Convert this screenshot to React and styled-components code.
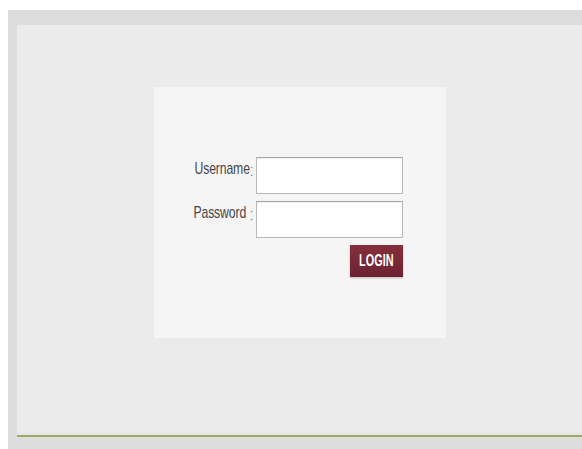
import React from 'react';
import styled, { createGlobalStyle } from 'styled-components';

const GlobalStyle = createGlobalStyle`
  html, body {
    margin: 0;
    padding: 0;
    background: #ffffff;
  }
  body {
    font-family: "Liberation Sans", Arial, sans-serif;
  }
`;

const Frame = styled.div`
  margin: 10px 0 0 8px;
  height: 439px;
  background: #dddddd;
  padding: 15px 0 0 9px;
  box-sizing: border-box;
`;

const Panel = styled.div`
  height: 412px;
  background: #ebebeb;
  border-bottom: 2px solid #9fae5c;
  box-shadow: inset 0 -3px 0 #e6e6ee;
  box-sizing: border-box;
  display: flex;
  justify-content: center;
  align-items: flex-start;
  padding-top: 62px;
`;

const Card = styled.div`
  width: 292px;
  height: 251px;
  background: #f5f5f5;
  box-sizing: border-box;
  padding: 70px 43px 0 0;
  display: flex;
  flex-direction: column;
  align-items: flex-end;
  gap: 7px;
`;

const Row = styled.div`
  display: flex;
  align-items: flex-start;
`;

const Label = styled.label`
  display: flex;
  align-items: flex-start;
  justify-content: flex-end;
  width: 100px;
  margin-right: 2px;
  color: #474747;
  font-size: 17px;
  line-height: 20px;
  padding-top: 2px;
`;

const LabelText = styled.span`
  display: inline-block;
  transform: scaleX(0.72);
  transform-origin: right center;
  letter-spacing: -0.2px;
`;

const Colon = styled.span`
  display: inline-block;
  width: 4px;
  margin-left: ${p => p.$gap}px;
  padding-top: ${p => p.$top}px;
  font-size: 11px;
  line-height: 4px;
  text-align: center;
  color: #6a6a6a;
  white-space: pre;
`;

const Field = styled.input`
  width: 147px;
  height: 37px;
  box-sizing: border-box;
  margin: 0;
  border: 1px solid #b8b8b8;
  border-top-color: #a4a4a4;
  background: #ffffff;
  box-shadow: inset 0 1px 1px rgba(0, 0, 0, 0.06);
  font-family: "Liberation Sans", Arial, sans-serif;
  font-size: 14px;
  padding: 0 6px;
  outline: none;
`;

const LoginButton = styled.button`
  width: 53px;
  height: 32px;
  border: none;
  background: linear-gradient(#84303d, #6c2230);
  box-shadow: 0 1px 2px rgba(0, 0, 0, 0.25);
  color: #ffffff;
  font-family: "Liberation Sans", Arial, sans-serif;
  font-weight: bold;
  font-size: 16px;
  padding: 0;
  cursor: pointer;
`;

const ButtonText = styled.span`
  display: inline-block;
  transform: scaleX(0.68);
`;

const App = () => {
  return (
    <>
      <GlobalStyle />
      <Frame>
        <Panel>
          <Card>
            <Row>
              <Label htmlFor="username">
                <LabelText>Username</LabelText>
                <Colon $gap={0} $top={6}>{'·\n\n·'}</Colon>
              </Label>
              <Field id="username" type="text" />
            </Row>
            <Row>
              <Label htmlFor="password">
                <LabelText>Password</LabelText>
                <Colon $gap={3} $top={6}>{'·\n\n·'}</Colon>
              </Label>
              <Field id="password" type="password" />
            </Row>
            <LoginButton type="button">
              <ButtonText>LOGIN</ButtonText>
            </LoginButton>
          </Card>
        </Panel>
      </Frame>
    </>
  );
};

export default App;
